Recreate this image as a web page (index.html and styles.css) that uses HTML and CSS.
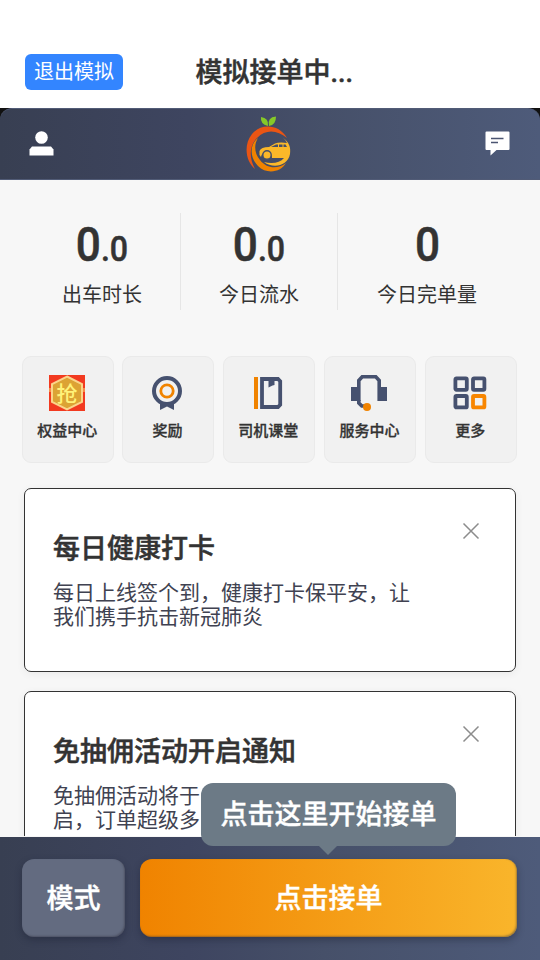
FILE: index.html
```
<!DOCTYPE html>
<html lang="zh-CN">
<head>
<meta charset="utf-8">
<title>模拟接单</title>
<link rel="stylesheet" href="styles.css">
</head>
<body>
<div class="screen">
  <header class="sim-bar">
    <button class="exit">退出模拟</button>
    <h1 class="sim-title">模拟接单中...</h1>
  </header>
  <div class="nav-wrap">
    <nav class="nav">
      <svg class="user" width="26" height="26" viewBox="0 0 26 26" fill="#fff"><circle cx="12.5" cy="6.5" r="6.3"/><path d="M.5 24.500V18.500L3 15.500h19l2.500 3v6z"/></svg>
      <svg class="logo" width="70" height="72" viewBox="0 0 70 72">
        <path d="M33 18Q25 16 26 9Q34 10 33 18zM34 18Q32 9 41 8.500Q41 17 34 18z" fill="#86c928"/>
        <path d="M52 30C44 16 26 15 17 26C8 37 11 54 20 61C14 50 14 38 22 30C31 21 42 22 52 30z" fill="#ea5514"/>
        <path d="M23 30C14 37 15 50 23 58C32 67 46 64 51 55C42 62 31 60 25 52C19 45 19 36 23 30z" fill="#f08300"/>
        <path d="M48 30C54 34 56 39 55 46C53 58 38 61 29 54C37 56 45 55 49 50H37A5.500 5.500 0 0 0 26 49L24.500 47V43Q26 39 34 39L40 35.500Q44 34 52 35Q51 32 48 30z" fill="#fbb829"/>
        <path d="M36 39L41 36.500H43V39zM44 36.500H47.500V39H44zM48.500 36.500H50.500L52 39H48.500z" fill="#465069"/>
        <circle cx="32" cy="47" r="4.200" fill="#fbb829" stroke="#465069" stroke-width="1.400"/>
      </svg>
      <svg class="message" width="26" height="26" viewBox="0 0 26 26"><path d="M1.500.5h22q1 0 1 1V18q0 1-1 1H11.500L5.500 24.500V19h-4q-1 0-1-1V1.500q0-1 1-1z" fill="#fff"/><path d="M6 7.500h12.500M6 11.500h7" stroke="#4b5572" stroke-width="1.400"/></svg>
    </nav>
  </div>

  <main class="content">
    <section class="stats">
      <div class="stat"><div class="value">0<small>.0</small></div><div class="label">出车时长</div></div>
      <div class="stat"><div class="value">0<small>.0</small></div><div class="label">今日流水</div></div>
      <div class="stat"><div class="value">0</div><div class="label">今日完单量</div></div>
    </section>

    <section class="tiles">
      <div class="tile">
        <svg width="36" height="36" viewBox="0 0 36 36"><rect width="36" height="36" fill="#f23a20"/><path d="M0 13h36v4H0z" fill="#f88a45"/><path d="M18 1.500L33 9v18L18 34.500L3 27V9z" fill="#dca334" stroke="#fbd48a" stroke-width="2"/><text x="18" y="25.500" text-anchor="middle" class="grab">抢</text></svg>
        <span>权益中心</span>
      </div>
      <div class="tile shifted">
        <svg width="36" height="36" viewBox="0 0 36 36"><path d="M11 26v9l7-3.500l7 3.500v-9z" fill="#46516f"/><circle cx="18" cy="16" r="13" fill="#f1f1f1" stroke="#46516f" stroke-width="4"/><circle cx="18" cy="16" r="6.200" fill="none" stroke="#f08300" stroke-width="2.800"/></svg>
        <span>奖励</span>
      </div>
      <div class="tile shifted">
        <svg width="36" height="36" viewBox="0 0 36 36"><path d="M4 2h4v32H4z" fill="#f08300"/><path d="M12 4h16l2.200 2.200v23.600L28 32H12z" fill="none" stroke="#46516f" stroke-width="3.800"/><path d="M18.500 4h6v6l-2 .5L18.500 12.500z" fill="#46516f"/></svg>
        <span>司机课堂</span>
      </div>
      <div class="tile">
        <svg width="36" height="36" viewBox="0 0 36 36"><path d="M7.800 26V5.500L11.200 1.800h13.600l3.400 3.700V26" fill="none" stroke="#46516f" stroke-width="3.600"/><path d="M0 12h8.500v14H0zM27.500 12H36v14h-8.500z" fill="#46516f"/><path d="M7.800 25v3l3 3h3" fill="none" stroke="#46516f" stroke-width="3.600"/><circle cx="16" cy="32" r="4" fill="#f08300"/></svg>
        <span>服务中心</span>
      </div>
      <div class="tile">
        <svg width="36" height="36" viewBox="0 0 36 36" fill="none" stroke="#46516f" stroke-width="3.800"><rect x="3.400" y="3.400" width="11.400" height="11.400" rx="1"/><rect x="21" y="3.400" width="11.400" height="11.400" rx="1"/><rect x="3.400" y="21" width="11.400" height="11.400" rx="1"/><rect x="21" y="21" width="11.400" height="11.400" rx="1" stroke="#f88600"/></svg>
        <span>更多</span>
      </div>
    </section>

    <section class="cards">
      <article class="card">
        <div class="card-text"><h2>每日健康打卡</h2><p>每日上线签个到，健康打卡保平安，让<br>我们携手抗击新冠肺炎</p></div>
        <svg class="close" width="18" height="18" viewBox="0 0 18 18"><path d="M1.500 1.500l15 15M16.500 1.500l-15 15" stroke="#8c8c8c" stroke-width="1.500"/></svg>
      </article>
      <article class="card">
        <div class="card-text"><h2>免抽佣活动开启通知</h2><p>免抽佣活动将于<br>启，订单超级多</p></div>
        <svg class="close" width="18" height="18" viewBox="0 0 18 18"><path d="M1.500 1.500l15 15M16.500 1.500l-15 15" stroke="#8c8c8c" stroke-width="1.500"/></svg>
      </article>
    </section>
  </main>

  <footer class="dock">
    <button class="mode">模式</button>
    <button class="accept">点击接单</button>
    <div class="tip">点击这里开始接单</div>
  </footer>
</div>
</body>
</html>
```
FILE: styles.css
```
* { box-sizing: border-box; }
body { margin: 0; font-family: Roboto, "Noto Sans CJK SC", sans-serif; color: #333; }
h1, h2, p { margin: 0; }
button { border: 0; padding: 0; font-family: inherit; color: #fff; }
svg { display: block; flex: none; }
.screen { width: 540px; height: 960px; display: flex; flex-direction: column; background: #f7f7f7; overflow: hidden; }

.sim-bar { height: 108px; flex: none; background: #fff; display: flex; align-items: flex-start; padding: 54px 0 0 25px; }
.exit { width: 98px; height: 36px; border-radius: 6px; background: #3385ff; font-size: 20px; line-height: 36px; }
.sim-title { margin: 1px 0 0 72.500px; font-size: 27px; font-weight: 500; line-height: 36px; -webkit-text-stroke: .5px #333; }

.nav-wrap { height: 72px; flex: none; background: #111; }
.nav { height: 72px; padding: 0 29px; display: grid; grid-template: 70px / 1fr 70px 1fr; align-items: center; border-radius: 12px 12px 0 0; background: linear-gradient(90deg, #383f52, #3e4560 35%, #465069 60%, #4e5b7a); border-top: 1px solid #515b76; border-bottom: 1px solid #515b76; }
.nav .message { justify-self: end; }

.content { height: 656px; flex: none; overflow: hidden; }
.stats { display: grid; grid-template-columns: 157px 157px 157px; margin: 33px 0 0 24px; height: 97px; }
.stat { width: 157px; text-align: center; border-right: 1px solid #e6e6e6; }
.stat:last-child { border: 0; margin-left: 10.500px; }
.value { height: 70px; font-size: 48px; font-weight: 500; line-height: 64px; transform: scaleX(.92); -webkit-text-stroke: .5px #333; }
.value small { font-size: 35px; }
.label { font-size: 20px; line-height: 24px; }

.tiles { display: grid; grid-template-columns: repeat(5, 92px); column-gap: 8.750px; margin: 46px 0 0 21.700px; }
.tile { height: 107px; border: 1px solid #eaeaea; border-radius: 9px; background: #f1f1f1; display: flex; flex-direction: column; align-items: center; padding: 18px 1px 0 0; font-size: 15px; font-weight: 500; line-height: 20px; gap: 10px; }
.tile.shifted { padding-right: 2px; }
.tile span { -webkit-text-stroke: .3px #333; }
.grab { font-size: 21px; font-weight: 500; fill: #fff279; }

.cards { margin: 25px 24px 0; display: flex; flex-direction: column; gap: 19px; }
.card { height: 184px; flex: none; border: 1px solid #333; border-radius: 7px; background: #fff; box-shadow: 0 2px 9px rgba(0, 0, 0, .06); display: flex; justify-content: space-between; padding: 33px 35px 0 28px; }
.card h2 { padding-top: 2px; font-size: 27px; line-height: 50px; font-weight: 500; -webkit-text-stroke: .5px #333; }
.card p { margin-top: 7px; font-size: 21px; line-height: 24px; color: #404251; white-space: nowrap; }

.dock { position: relative; height: 124px; flex: none; padding: 22px 23px 0 22px; display: flex; gap: 15px; border-top: 1px solid #f7f7f7; background: linear-gradient(90deg, #383f52, #3e4560 35%, #465069 60%, #4e5b7a) padding-box; }
.dock button { height: 78px; padding-bottom: 4px; border-radius: 12px; font-size: 27px; font-weight: 500; -webkit-text-stroke: .4px #fff; box-shadow: 0 3px 7px rgba(25, 30, 50, .4), inset -1px -1px 2px rgba(50, 50, 65, .45); }
.mode { width: 103px; background: #636b80; }
.accept { flex: 1; background: linear-gradient(90deg, #f08300, #f9b52b); }
.tip { position: absolute; left: 201px; top: -54px; width: 255px; height: 63px; padding-top: 2px; border-radius: 12px; background: #6c7a86; color: #fff; text-align: center; font-size: 27px; font-weight: 500; line-height: 61px; -webkit-text-stroke: .4px #fff; }
.tip::after { content: ""; position: absolute; left: 118px; top: 63px; border: 9px solid transparent; border-top-color: #6c7a86; border-bottom: 0; }
```
